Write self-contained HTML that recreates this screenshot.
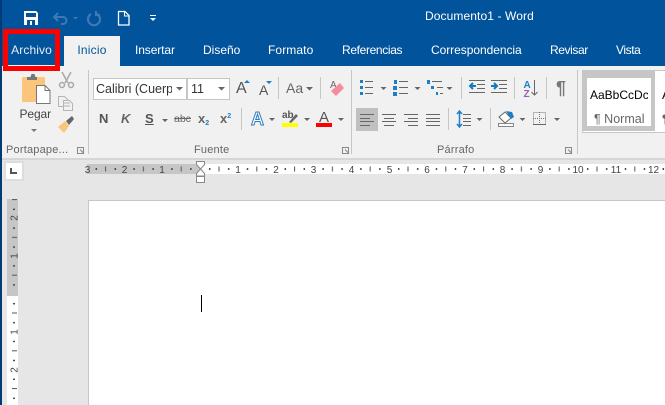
<!DOCTYPE html>
<html><head><meta charset="utf-8">
<style>
html,body{margin:0;padding:0}
body{width:665px;height:405px;overflow:hidden;position:relative;background:#e6e6e6;font-family:"Liberation Sans",sans-serif}
.a{position:absolute;white-space:nowrap}
.tab{position:absolute;top:36px;height:29px;line-height:29px;color:#fff;font-size:12px;text-align:center;white-space:nowrap}
.lbl{position:absolute;top:143px;font-size:11px;color:#666;line-height:14px;white-space:nowrap;letter-spacing:.2px}
.sep{position:absolute;top:70px;width:1px;height:84px;background:#c6c6c6}
.s2{position:absolute;width:1px;background:#c6c6c6}
svg{position:absolute;left:0;top:0}
</style></head><body>
<div class="a" style="left:0;top:0;width:665px;height:66px;background:#01539c"></div>
<div class="a" style="left:0;top:0;width:2px;height:405px;background:#013a78"></div>
<div class="a" style="left:2px;top:66px;width:663px;height:92px;background:#f1f1f1"></div>
<div class="a" style="left:2px;top:158px;width:663px;height:2px;background:#d6d6d6"></div>
<div class="a" style="left:64px;top:36px;width:56px;height:30px;background:#f1f1f1"></div>

<div class="a" style="left:425px;top:9px;color:#fff;font-size:12px;line-height:15px;letter-spacing:.1px">Documento1 - Word</div>
<div class="tab" style="left:3px;width:57px;color:#e8eef6;letter-spacing:.1px">Archivo</div>
<div class="tab" style="left:64px;width:56px;color:#01539c;letter-spacing:.2px">Inicio</div>
<div class="tab" style="left:135px;letter-spacing:-.1px">Insertar</div>
<div class="tab" style="left:203px">Diseño</div>
<div class="tab" style="left:268px;letter-spacing:.1px">Formato</div>
<div class="tab" style="left:342px;letter-spacing:-.35px">Referencias</div>
<div class="tab" style="left:431px;letter-spacing:-.05px">Correspondencia</div>
<div class="tab" style="left:550px;letter-spacing:-.4px">Revisar</div>
<div class="tab" style="left:616px;letter-spacing:-.4px">Vista</div>

<div class="a" style="left:8px;top:65px;width:47px;height:1px;background:#f1f1f1"></div>
<div class="a" style="left:3px;top:29px;width:47px;height:32px;border:5px solid #f00"></div>

<!-- font boxes -->
<div class="a" style="left:93px;top:78px;width:92px;height:20px;background:#fff;border:1px solid #c6c6c6;font-size:12.5px;line-height:20px;color:#333;overflow:hidden;text-indent:2px">Calibri (Cuerpo</div>
<div class="a" style="left:172px;top:79px;width:13px;height:20px;background:#fff"></div>
<div class="a" style="left:187px;top:78px;width:41px;height:20px;background:#fff;border:1px solid #c6c6c6;font-size:12.5px;line-height:20px;color:#333;text-indent:3px">11</div>

<div class="a" style="left:19.500px;top:107px;font-size:12px;line-height:15px;color:#444;letter-spacing:-.1px">Pegar</div>

<div class="lbl" style="left:6px">Portapape...</div>
<div class="lbl" style="left:194px">Fuente</div>
<div class="lbl" style="left:437px">Párrafo</div>

<div class="a" style="left:99px;top:111px;font-size:13px;font-weight:bold;color:#555;line-height:15px">N</div>
<div class="a" style="left:121px;top:111px;font-size:13px;font-weight:bold;font-style:italic;color:#666;line-height:15px">K</div>
<div class="a" style="left:145px;top:111px;font-size:13px;font-weight:bold;color:#555;line-height:15px;text-decoration:underline">S</div>
<div class="a" style="left:174px;top:112px;font-size:10.500px;color:#666;line-height:15px;text-decoration:line-through">abc</div>
<div class="a" style="left:198px;top:111px;font-size:13px;font-weight:bold;color:#666;line-height:15px">x<span style="font-size:7px;color:#1f7fc4;position:relative;top:2px">2</span></div>
<div class="a" style="left:220px;top:111px;font-size:13px;font-weight:bold;color:#666;line-height:15px">x<span style="font-size:7px;color:#1f7fc4;position:relative;top:-5px">2</span></div>

<div class="a" style="left:236px;top:80px;font-size:16px;color:#555;line-height:18px">A</div>
<div class="a" style="left:259px;top:82px;font-size:14px;color:#555;line-height:16px">A</div>
<div class="a" style="left:286px;top:79px;font-size:14px;color:#666;line-height:18px">Aa</div>
<div class="a" style="left:251px;top:110px;font-size:18px;font-weight:bold;color:#fff;line-height:18px;-webkit-text-stroke:1px #2a7cc0">A</div>
<div class="a" style="left:282px;top:111px;font-size:10px;font-weight:bold;color:#555;line-height:10px">ab</div>
<div class="a" style="left:319px;top:109px;font-size:15px;color:#555;line-height:17px">A</div>
<div class="a" style="left:330px;top:80px;font-size:10px;color:#666;line-height:12px">A</div>
<div class="a" style="left:556px;top:79px;font-size:18px;font-weight:bold;color:#777;line-height:18px">¶</div>

<!-- styles gallery -->
<div class="a" style="left:582px;top:70px;width:83px;height:63px;background:#fff;border:1px solid #c6c6c6;border-right:0;box-sizing:border-box"></div>
<div class="a" style="left:583px;top:71px;width:72px;height:60px;box-sizing:border-box;border:solid #c6c6c6;border-width:7px 4px 5px 4px;background:#fff"></div>
<div class="a" style="left:590px;top:87px;width:58px;overflow:hidden;font-size:12px;line-height:16px;color:#000">AaBbCcDc</div>
<div class="a" style="left:594px;top:112px;font-size:12.500px;line-height:15px;color:#666">¶ Normal</div>
<div class="a" style="left:662px;top:87px;font-size:12px;line-height:16px;color:#000">A</div>
<div class="a" style="left:662px;top:112px;font-size:12px;line-height:15px;color:#666">¶</div>

<div class="sep" style="left:88px"></div>
<div class="sep" style="left:351px"></div>
<div class="sep" style="left:577px"></div>
<div class="s2" style="left:278px;top:77px;height:22px"></div>
<div class="s2" style="left:320px;top:77px;height:22px"></div>
<div class="s2" style="left:241px;top:108px;height:22px"></div>
<div class="s2" style="left:461px;top:77px;height:22px"></div>
<div class="s2" style="left:514px;top:77px;height:22px"></div>
<div class="s2" style="left:546px;top:77px;height:22px"></div>
<div class="s2" style="left:448px;top:108px;height:22px"></div>
<div class="s2" style="left:490px;top:108px;height:22px"></div>

<svg width="665" height="405" viewBox="0 0 665 405">
<defs>
<pattern id="h" x="200" y="0" width="37.8" height="405" patternUnits="userSpaceOnUse">
<rect x="9" y="168" width="1.4" height="2" fill="#444"/><rect x="18.500" y="166.500" width="1" height="5" fill="#555"/><rect x="28" y="168" width="1.4" height="2" fill="#444"/>
</pattern>
<pattern id="v" x="0" y="294" width="405" height="37.8" patternUnits="userSpaceOnUse">
<rect x="13" y="9" width="2" height="1.4" fill="#444"/><rect x="12" y="18.500" width="5" height="1" fill="#555"/><rect x="13" y="28" width="2" height="1.4" fill="#444"/>
</pattern>
</defs>
<!-- QAT -->
<path d="M24 11h12l2 2v12H24z" fill="#fff"/>
<rect x="26" y="13" width="10" height="4" fill="#01539c"/>
<rect x="27" y="20" width="8" height="5" fill="#01539c"/>
<rect x="30" y="21" width="2" height="4" fill="#fff"/>
<path d="M58 13l-4 4 4 4M55 17h8a3.500 3.500 0 0 1 0 7h-2" fill="none" stroke="#3d7ab5" stroke-width="2"/>
<path d="M73 17h5l-2.500 2.500z" fill="#3d7ab5"/>
<path d="M91 14a6 6 0 1 0 6 0M96 11v4h4" fill="none" stroke="#3d7ab5" stroke-width="2.200"/>
<path d="M118.500 11.500h6.500l4 4v9.500h-10.500z" fill="#01539c" stroke="#fff" stroke-width="1.300"/>
<path d="M124.500 11.500v4.500h4.500" fill="none" stroke="#fff"/>
<rect x="150" y="15" width="6" height="1" fill="#fff"/><path d="M150 18h6l-3 3z" fill="#fff"/>
<!-- paste -->
<rect x="22" y="77" width="23" height="25" rx="1" fill="#fbc67c"/>
<path d="M27 80v-3h3.500l1-3h3l1 3h1.500v3z" fill="#777"/>
<path d="M36.500 85.500h8.500l5 5v13H36.500z" fill="#fff" stroke="#777"/>
<path d="M45 85.500v5h5" fill="none" stroke="#777"/>
<path d="M31 129h6l-3 3z" fill="#777"/>
<!-- cut copy brush -->
<g fill="none" stroke="#a8a8a8" stroke-width="1.500"><path d="M62 72l6 11M71 72l-6 11"/><circle cx="62" cy="85" r="2.500"/><circle cx="71" cy="85" r="2.500"/></g>
<g fill="#f1f1f1" stroke="#b5b5b5"><path d="M58.500 96.500h6l3 3v7h-9z"/><path d="M63.500 100.500h6l3 3v7h-9z"/></g>
<path d="M64 103h6M64 106h6" stroke="#b5b5b5"/>
<path d="M58 127l7-6 4 5-5 7z" fill="#fbc67c"/><path d="M66 121l6-5 2 3-5 6z" fill="#666"/>
<path d="M77.500 147.500h6v6h-6zM80 149.500l4 4" fill="none" stroke="#888"/>
<path d="M342.500 147.500h6v6h-6zM345 149.500l4 4" fill="none" stroke="#888"/>
<path d="M565.500 147.500h6v6h-6zM568 149.500l4 4" fill="none" stroke="#888"/>
<!-- dropdown arrows -->
<g fill="#666">
<path d="M176 87h7l-3.500 3.500zM218 87h7l-3.500 3.500zM162 119h6l-3 3zM306 87h7l-3.500 3.500zM269 118h6l-3 3zM304 118h6l-3 3zM338 118h6l-3 3zM380.500 87h6l-3 3zM414.500 87h6l-3 3zM446.500 87h6l-3 3zM476.500 118h6l-3 3zM519.500 118h6l-3 3zM554 118h6l-3 3z"/>
</g>
<!-- grow/shrink -->
<path d="M244 83h6l-3-3zM266 81h6l-3 3z" fill="#1f7fc4"/>
<!-- highlight, colour bars -->
<rect x="282" y="123" width="16" height="4" fill="#ff0"/>
<path d="M289 122l7-8 2 2-7 7z" fill="#666"/>
<rect x="316" y="123" width="16" height="4" fill="#f00"/>
<!-- eraser -->
<path d="M331 91l9-8 4 5-8 8z" fill="#f58b9c"/>
<!-- lists -->
<g fill="#1f7fc4"><rect x="360" y="80" width="3" height="3"/><rect x="360" y="86" width="3" height="3"/><rect x="360" y="92" width="3" height="3"/>
<rect x="394" y="80" width="3" height="4"/><rect x="393" y="86" width="4" height="4"/><rect x="393" y="92" width="4" height="4"/>
<rect x="427" y="80" width="3" height="4"/><rect x="431" y="86" width="3" height="3"/><rect x="436" y="92" width="2" height="3"/></g>
<g fill="#666"><rect x="365" y="81" width="8" height="1"/><rect x="365" y="87" width="8" height="1"/><rect x="365" y="93" width="8" height="1"/>
<rect x="399" y="81" width="9" height="1"/><rect x="399" y="87" width="9" height="1"/><rect x="399" y="93" width="9" height="1"/>
<rect x="432" y="81" width="10" height="1"/><rect x="437" y="87" width="6" height="1"/><rect x="440" y="93" width="3" height="1"/></g>
<!-- indents -->
<g fill="#666"><rect x="469" y="80" width="16" height="1"/><rect x="477" y="84" width="8" height="1"/><rect x="477" y="88" width="8" height="1"/><rect x="469" y="92" width="16" height="1"/>
<rect x="491" y="80" width="16" height="1"/><rect x="499" y="84" width="8" height="1"/><rect x="499" y="88" width="8" height="1"/><rect x="491" y="92" width="16" height="1"/></g>
<path d="M476 86h-6M473 83l-3 3 3 3M491 86h6M494 83l3 3-3 3" fill="none" stroke="#1379bf" stroke-width="2"/>
<!-- sort -->
<text x="523.500" y="88" font-family="Liberation Sans" font-size="10" font-weight="bold" fill="#1f7fc4">A</text>
<text x="523.500" y="97" font-family="Liberation Sans" font-size="10" font-weight="bold" fill="#9a5fb5">Z</text>
<path d="M534.500 80v15M531.500 92l3 3 3-3" fill="none" stroke="#666"/>
<!-- align -->
<rect x="356" y="108" width="22" height="23" fill="#c0c0c0"/>
<g fill="#666"><rect x="360" y="114" width="14" height="1"/><rect x="360" y="118" width="10" height="1"/><rect x="360" y="121" width="14" height="1"/><rect x="360" y="125" width="10" height="1"/>
<rect x="382" y="114" width="14" height="1"/><rect x="384" y="118" width="10" height="1"/><rect x="382" y="121" width="14" height="1"/><rect x="384" y="125" width="10" height="1"/>
<rect x="404" y="114" width="14" height="1"/><rect x="408" y="118" width="10" height="1"/><rect x="404" y="121" width="14" height="1"/><rect x="408" y="125" width="10" height="1"/>
<rect x="426" y="114" width="14" height="1"/><rect x="426" y="118" width="14" height="1"/><rect x="426" y="121" width="14" height="1"/><rect x="426" y="125" width="14" height="1"/>
<rect x="463" y="114" width="8" height="1"/><rect x="463" y="118" width="8" height="1"/><rect x="463" y="121" width="8" height="1"/><rect x="463" y="125" width="8" height="1"/></g>
<path d="M459.500 112v14M457 114l2.500-3 2.500 3M457 124l2.500 3 2.500-3" fill="none" stroke="#1f7fc4" stroke-width="1.500"/>
<!-- shading -->
<path d="M499 117l6-5 6 6-6 5z" fill="#fff" stroke="#666"/>
<path d="M506 111l6 1 2 5-3 2z" fill="#1f7fc4"/>
<rect x="498.500" y="123.500" width="15" height="3" fill="#fff" stroke="#888"/>
<!-- borders -->
<rect x="533.500" y="112.500" width="12" height="12" fill="none" stroke="#777" stroke-dasharray="1 1"/>
<path d="M539.500 112v13M533 118.500h13" stroke="#777" stroke-dasharray="1 1" fill="none"/>
<path d="M533 124.500h13" stroke="#666"/>
<!-- ruler corner -->
<rect x="4" y="161" width="20" height="20" fill="#ddd"/>
<rect x="6" y="163" width="16" height="16" fill="#fff"/>
<path d="M11 168v5h6" fill="none" stroke="#555" stroke-width="2"/>
<!-- h ruler -->
<rect x="87" y="164" width="113" height="10" fill="#c6c6c6"/>
<rect x="200" y="164" width="465" height="10" fill="#fff"/>
<rect x="87" y="164" width="578" height="10" fill="url(#h)"/>
<g font-family="Liberation Sans" font-size="10" fill="#444" text-anchor="middle">
<text x="87.500" y="173">3</text><text x="124.500" y="173">2</text><text x="162" y="173">1</text>
<text x="238" y="173">1</text><text x="276" y="173">2</text><text x="313.500" y="173">3</text><text x="351.500" y="173">4</text><text x="389.500" y="173">5</text><text x="427" y="173">6</text><text x="465" y="173">7</text><text x="502.500" y="173">8</text><text x="540.500" y="173">9</text><text x="578" y="173">10</text><text x="616" y="173">11</text><text x="653.500" y="173">12</text>
</g>
<path d="M196.500 161.500h8v3l-4 4.500-4-4.500zM200.500 169l4 4.500v2.500h-8v-2.500z" fill="#fff" stroke="#888"/>
<rect x="196.500" y="176.500" width="8" height="6" fill="#fff" stroke="#888"/>
<!-- v ruler -->
<rect x="7" y="199" width="11" height="97" fill="#c6c6c6"/>
<rect x="7" y="296" width="11" height="109" fill="#fff"/>
<rect x="7" y="199" width="11" height="206" fill="url(#v)"/>
<g font-family="Liberation Sans" font-size="10" fill="#444" text-anchor="middle">
<text transform="translate(17.500,218) rotate(-90)">2</text>
<text transform="translate(17.500,256) rotate(-90)">1</text>
<text transform="translate(17.500,332) rotate(-90)">1</text>
<text transform="translate(17.500,370) rotate(-90)">2</text>
</g>
</svg>

<!-- page -->
<div class="a" style="left:88px;top:200px;width:577px;height:205px;background:#fff;border-left:1px solid #c6c6c6;border-top:1px solid #c6c6c6;box-sizing:border-box"></div>
<div class="a" style="left:201px;top:295px;width:1px;height:17px;background:#000"></div>
</body></html>
